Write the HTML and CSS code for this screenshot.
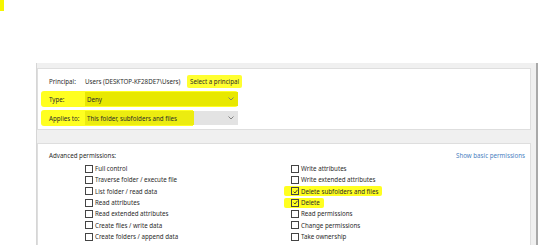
FILE: index.html
```html
<!DOCTYPE html>
<html lang="en">
<head>
    <meta charset="UTF-8">
    <meta name="viewport" content="width=device-width, initial-scale=1.0">
    <title>Permission Entry</title>
    <link rel="stylesheet" href="styles.css">
</head>
<body>
    <div class="marker"></div>
    <div class="dialog">
        <div class="box top-box">
            <div class="row">
                <span class="label">Principal:</span>
                <span class="value">Users (DESKTOP-KF28DE7\Users)</span>
                <span class="link-hl">Select a principal</span>
            </div>
            <div class="row row-hl">
                <span class="label">Type:</span>
                <div class="select select-full">
                    <span>Deny</span>
                    <svg class="chev" width="6" height="4" viewBox="0 0 6 4"><path d="M0.5 0.5 L3 3 L5.5 0.5" fill="none" stroke="#777" stroke-width="0.9"/></svg>
                </div>
            </div>
            <div class="row row-hl row-part">
                <span class="label">Applies to:</span>
                <div class="select select-part">
                    <span>This folder, subfolders and files</span>
                    <svg class="chev" width="6" height="4" viewBox="0 0 6 4"><path d="M0.5 0.5 L3 3 L5.5 0.5" fill="none" stroke="#777" stroke-width="0.9"/></svg>
                </div>
            </div>
        </div>

        <div class="box perm-box">
            <div class="perm-head">
                <span>Advanced permissions:</span>
                <span class="show-basic">Show basic permissions</span>
            </div>
            <div class="perm-grid">
                <div class="col">
                    <label class="perm"><span class="cb"></span>Full control</label>
                    <label class="perm"><span class="cb"></span>Traverse folder / execute file</label>
                    <label class="perm"><span class="cb"></span>List folder / read data</label>
                    <label class="perm"><span class="cb"></span>Read attributes</label>
                    <label class="perm"><span class="cb"></span>Read extended attributes</label>
                    <label class="perm"><span class="cb"></span>Create files / write data</label>
                    <label class="perm"><span class="cb"></span>Create folders / append data</label>
                </div>
                <div class="col">
                    <label class="perm"><span class="cb"></span>Write attributes</label>
                    <label class="perm"><span class="cb"></span>Write extended attributes</label>
                    <label class="perm perm-hl"><span class="cb checked"><svg width="5" height="5" viewBox="0 0 5 5"><path d="M0.6 2.6 L2 4 L4.5 0.8" fill="none" stroke="#333" stroke-width="0.9"/></svg></span>Delete subfolders and files</label>
                    <label class="perm perm-hl"><span class="cb checked"><svg width="5" height="5" viewBox="0 0 5 5"><path d="M0.6 2.6 L2 4 L4.5 0.8" fill="none" stroke="#333" stroke-width="0.9"/></svg></span>Delete</label>
                    <label class="perm"><span class="cb"></span>Read permissions</label>
                    <label class="perm"><span class="cb"></span>Change permissions</label>
                    <label class="perm"><span class="cb"></span>Take ownership</label>
                </div>
            </div>
        </div>
    </div>
</body>
</html>
```

FILE: styles.css
```css
body {
    margin: 0;
    width: 540px;
    height: 245px;
    overflow: hidden;
    background: #fff;
    font-family: "Noto Sans", "Open Sans", sans-serif;
    font-size: 6.2px;
    color: #2b2b2b;
}
.marker {
    width: 4px;
    height: 11px;
    background: #f6f600;
}
.dialog {
    margin-top: 52px;
    margin-left: 36px;
    width: 494px;
    height: 177px;
    padding: 5px 5px 0 0;
    background: #f0f0f0;
    border-left: 1px solid #d6d6d6;
    border-right: 2px solid #a9a9a9;
}
.box {
    background: #fff;
    border: 1px solid #dedede;
}
.top-box {
    padding: 5px 0 3px 3px;
}
.row {
    display: flex;
    align-items: center;
    height: 14px;
    padding-left: 8px;
    white-space: nowrap;
}
.label {
    width: 36px;
}
.value {
    width: 103px;
}
.link-hl {
    background: #ffff30;
    padding: 2px 3px;
    border-radius: 2px;
    margin-left: -1px;
}
.row-hl {
    height: 16px;
    margin-top: 3px;
    width: 189px;
    background: #ffff20;
    border-radius: 3px;
    padding-left: 8px;
}
.row-part {
    background: linear-gradient(to right, #ffff20 0, #ffff20 152px, transparent 152px);
}
.select {
    flex: 1;
    height: 14px;
    display: flex;
    align-items: center;
    justify-content: space-between;
    padding: 0 4px 0 2px;
    box-sizing: border-box;
}
.select-full {
    background: #e8e800;
}
.select-part {
    background: linear-gradient(to right, #ecec10 0, #ecec10 109px, #e3e3e3 109px);
}
.perm-box {
    margin-top: 13px;
    height: 101px;
    padding: 7px 5px 0 11px;
    border-bottom: none;
}
.perm-head {
    display: flex;
    justify-content: space-between;
    line-height: 10px;
    height: 12px;
}
.show-basic {
    color: #4a7fbf;
}
.perm-grid {
    display: flex;
    padding-left: 36px;
}
.col {
    width: 206px;
    display: flex;
    flex-direction: column;
}
.perm {
    display: flex;
    align-items: center;
    height: 11.33px;
    align-self: flex-start;
    white-space: nowrap;
}
.cb {
    width: 6px;
    height: 6px;
    border: 1px solid #444;
    margin-right: 2px;
    display: flex;
    align-items: center;
    justify-content: center;
    background: #fff;
}
.cb.checked {
    background: transparent;
}
.perm-hl {
    background: #ffff20;
    margin-left: -7px;
    padding: 0 4px 0 7px;
    height: 10px;
    margin-top: 0.66px;
    margin-bottom: 0.67px;
    border-radius: 2px;
}
```
